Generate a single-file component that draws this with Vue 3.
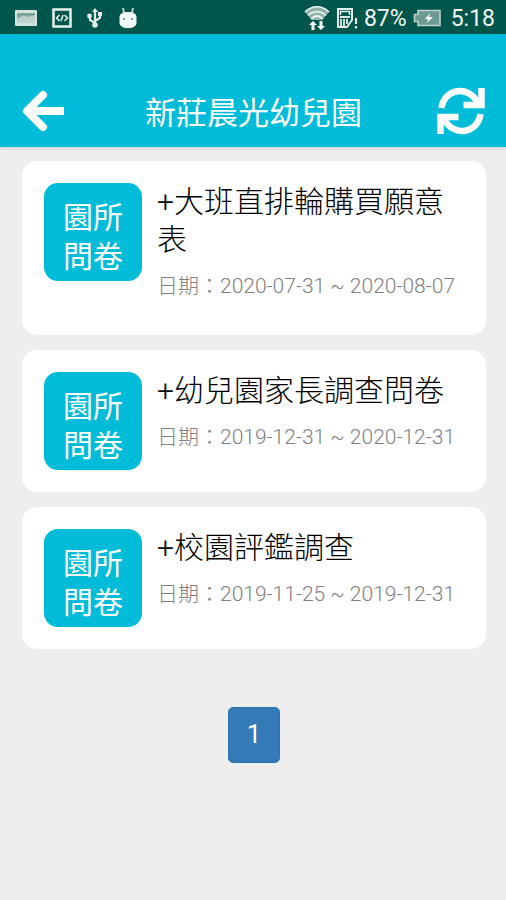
<template>
  <div class="page">
    <div class="status-bar">
      <div class="status-icons">
        <svg class="status-picture" width="24" height="18" viewBox="0 0 24 18">
          <rect x="1" y="1" width="22" height="16" rx="1" fill="#d5e3df" />
          <rect x="3" y="4" width="18" height="10" fill="#8fb3aa" />
          <path d="M3 10l6-3 5 1 7-2v8H3z" fill="#bcd2cc" />
          <path d="M3 6l7-1 6 1 5-1" fill="none" stroke="#5d9186" />
        </svg>
        <svg width="20" height="20" viewBox="0 0 20 20" fill="none" stroke="#e2ece9">
          <rect x="1.500" y="1.500" width="17" height="17" stroke-width="2.600" />
          <path d="M7.500 7L4.500 10l3 3M12.500 7l3 3-3 3M11 7l-2 6" stroke-width="1.600" />
        </svg>
        <svg width="18" height="20" viewBox="0 0 18 20" fill="none" stroke="#e2ece9" stroke-width="2.200">
          <path d="M9 3v14M9 15L4 12V8M9 13l5-3V6" />
          <path d="M6 4l3-4 3 4z" fill="#e2ece9" stroke="none" />
          <circle cx="9" cy="17" r="2.800" fill="#e2ece9" stroke="none" />
          <circle cx="3.500" cy="8" r="2.400" fill="#e2ece9" stroke="none" />
          <rect x="12" y="4" width="4" height="4" fill="#e2ece9" stroke="none" />
        </svg>
        <svg width="20" height="22" viewBox="0 0 20 22">
          <path d="M5 1l1 5M15 1l-1 5" stroke="#c4d8d3" stroke-width="1.800" />
          <path d="M1.500 10c0-3 3-5 8.500-5s8.500 2 8.500 5v5c0 4-3 6-8.500 6s-8.500-2-8.500-6z" fill="#f3f8f6" />
          <circle cx="6" cy="12" r="1" fill="#4d8a7e" />
          <circle cx="14" cy="12" r="1" fill="#4d8a7e" />
        </svg>
      </div>
      <div class="status-info">
        <svg width="26" height="26" viewBox="0 0 26 26">
          <path d="M1 7c7-7 17-7 24 0l-8 9H9z" fill="#8fb3aa" />
          <path d="M1 7c7-7 17-7 24 0M4 10.500c5-5 13-5 18 0M7 14c4-4 8-4 12 0" fill="none" stroke="#eff5f3" stroke-width="1.700" />
          <path d="M4 15h18v11H4z" fill="#00564b" />
          <path d="M5 20l4-4 4 4h-2.500v5h-3v-5zM13 21l4 4 4-4h-2.500v-5h-3v5z" fill="#fff" />
        </svg>
        <svg width="22" height="22" viewBox="0 0 22 22" fill="none" stroke="#e2ece9">
          <path d="M2 20V2h14v11l-5 7z" stroke-width="2" />
          <path d="M4.500 8V4.500h9V8" stroke-width="1.500" />
          <path d="M4 9h10v2H4z" fill="#e2ece9" stroke="none" />
          <path d="M5 12v7M8 12v7M11 12v5" stroke-width="1.800" />
          <path d="M20 11v6M20 19v2.500" stroke-width="2.200" />
        </svg>
        <span class="battery-text">87%</span>
        <svg class="battery" width="28" height="18" viewBox="0 0 28 18">
          <path d="M5 1.500h22v15H5v-4H1.500v-7H5z" fill="#6c9a91" stroke="#bdd1cc" stroke-width="1.600" />
          <path d="M17 4l-5 6h3l-1 4 6-6h-4z" fill="#fff" />
        </svg>
        <span class="clock">5:18</span>
      </div>
    </div>

    <header class="header">
      <button class="icon-btn" type="button" aria-label="返回">
        <svg width="42" height="42" viewBox="0 0 42 42" fill="none" stroke="#fff" stroke-width="8">
          <path d="M6 21h36" />
          <path d="M21 5L5 21l16 16" stroke-linejoin="round" stroke-linecap="round" />
        </svg>
      </button>
      <h1>{{ schoolName }}</h1>
      <button class="icon-btn" type="button" aria-label="重新整理">
        <svg width="48" height="48" viewBox="0 0 48 48" fill="none" stroke="#fff" stroke-width="6.500">
          <path d="M4.500 21C7 2 31-3 41 16" />
          <path d="M26.500 18h18V1" />
          <path d="M43.500 27C41 46 17 51 7 32" />
          <path d="M21.500 30h-18v17" />
        </svg>
      </button>
    </header>

    <main>
      <ul class="survey-list">
        <li class="survey" v-for="survey in surveys" :key="survey.id">
          <div class="badge">園所<br />問卷</div>
          <div class="survey-body">
            <h2>+{{ survey.title }}</h2>
            <p>日期：{{ survey.start }} ~ {{ survey.end }}</p>
          </div>
        </li>
      </ul>
      <nav class="pagination">
        <button
          v-for="page in pages"
          :key="page"
          type="button"
          :class="{ active: page === currentPage }"
          @click="currentPage = page"
        >
          {{ page }}
        </button>
      </nav>
    </main>
  </div>
</template>

<script setup>
import { ref } from 'vue';

const schoolName = '新莊晨光幼兒園';
const pages = [1];
const currentPage = ref(1);
const surveys = ref([
  { id: 1, title: '大班直排輪購買願意表', start: '2020-07-31', end: '2020-08-07' },
  { id: 2, title: '幼兒園家長調查問卷', start: '2019-12-31', end: '2020-12-31' },
  { id: 3, title: '校園評鑑調查', start: '2019-11-25', end: '2019-12-31' },
]);
</script>

<style>
body {
  margin: 0;
  background-color: #eee;
}
</style>

<style scoped>
.page {
  min-height: 100vh;
  background-color: #eee;
  font-family: Roboto, "Noto Sans CJK TC", sans-serif;
}

/* status bar */
.status-bar {
  display: flex;
  justify-content: space-between;
  align-items: center;
  height: 34px;
  padding: 2px 11px 0 14px;
  box-sizing: border-box;
  background-color: #00564b;
  color: #f3f8f6;
}

.status-icons {
  display: flex;
  align-items: center;
  gap: 14px;
}

.status-info {
  display: flex;
  align-items: center;
  gap: 6px;
  font-size: 23px;
  line-height: 30px;
}

.status-info span {
  padding-top: 2px;
}

.battery {
  margin-right: 4px;
}

/* header */
.header {
  display: grid;
  grid-template-columns: 1fr auto 1fr;
  align-items: center;
  height: 73px;
  padding: 40px 21px 0 22px;
  background-color: #00bcd9;
  box-shadow: 0 1px 4px rgba(0, 0, 0, 0.15);
}

.header h1 {
  margin: 0;
  padding-top: 6px;
  color: #fff;
  font-size: 31px;
  font-weight: 400;
  line-height: 40px;
}

.icon-btn {
  display: flex;
  justify-self: start;
  padding: 0;
  border: none;
  background: none;
  cursor: pointer;
}

.icon-btn:last-child {
  justify-self: end;
}

/* surveys */
main {
  padding: 14px 20px 20px 22px;
}

.survey-list {
  display: flex;
  flex-direction: column;
  gap: 15px;
  margin: 0;
  padding: 0;
  list-style: none;
}

.survey {
  display: flex;
  align-items: flex-start;
  gap: 15px;
  padding: 22px;
  border-radius: 15px;
  background-color: #fff;
}

.badge {
  flex: none;
  box-sizing: border-box;
  width: 98px;
  height: 98px;
  padding-top: 15px;
  border-radius: 14px;
  background-color: #00bcd9;
  color: #fff;
  font-size: 30px;
  line-height: 39px;
  text-align: center;
}

.survey-body {
  flex: 1;
  min-width: 0;
}

.survey-body h2 {
  margin: 0;
  color: #000;
  font-size: 30px;
  font-weight: 300;
  line-height: 38px;
}

.survey-body p {
  margin: 12px 0;
  color: #808080;
  font-size: 21px;
  font-weight: 300;
  line-height: 30px;
}

/* pagination */
.pagination {
  display: flex;
  justify-content: center;
  margin-top: 58px;
}

.pagination button {
  padding: 12px 18px;
  border: 1px solid #ddd;
  border-radius: 5px;
  background-color: #fff;
  color: #337ab7;
  font-family: inherit;
  font-size: 25px;
  line-height: 30px;
  cursor: pointer;
}

.pagination button.active {
  border-color: #2a72b0;
  background-color: #337ab7;
  color: #fff;
}
</style>
